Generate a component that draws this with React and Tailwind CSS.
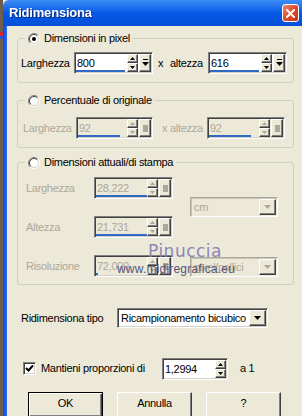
import React from 'react';

const SUNKEN = 'border border-t-[#808080] border-l-[#808080] border-b-white border-r-white shadow-[inset_1px_1px_0_#404040,inset_-1px_-1px_0_#D4D0C8]';
const RAISED = 'bg-[#ECE9D8] border border-t-white border-l-white border-b-[#404040] border-r-[#404040] shadow-[inset_-1px_-1px_0_#808080]';

const Tri = ({ up, color = '#000' }) => (
    <svg width="5" height="3" viewBox="0 0 5 3">
        <polygon points={up ? '0,3 5,3 2.5,0' : '0,0 5,0 2.5,3'} fill={color} />
    </svg>
);

const Radio = ({ checked }) => (
    <svg width="12" height="12" viewBox="0 0 12 12" className="shrink-0">
        <circle cx="6" cy="6" r="5" fill="white" />
        <path d="M 2.1 9.9 A 5.5 5.5 0 0 1 9.9 2.1" fill="none" stroke="#808080" />
        <path d="M 9.9 2.1 A 5.5 5.5 0 0 1 2.1 9.9" fill="none" stroke="#ffffff" />
        <path d="M 2.8 9.2 A 4.5 4.5 0 0 1 9.2 2.8" fill="none" stroke="#404040" />
        <path d="M 9.2 2.8 A 4.5 4.5 0 0 1 2.8 9.2" fill="none" stroke="#D4D0C8" />
        {checked && <circle cx="6" cy="6" r="2" fill="#000" />}
    </svg>
);

// edit field with spin arrows and a preset button
const SpinBox = ({ value, w, bar, disabled, extra = true }) => {
    const c = disabled ? '#ACA899' : '#000';
    return (
        <div className={`${w} h-[22px] flex p-[1px] ${SUNKEN} ${disabled ? 'bg-[#ECE9D8]' : 'bg-white'}`}>
            <div className="relative flex-1 flex items-center pl-[1px]">
                <span className={disabled ? 'text-[#ACA899]' : 'text-black'}>{value}</span>
                <div className={`absolute left-0 bottom-0 h-[2px] bg-[#316AC5] ${bar}`} />
            </div>
            <div className="flex flex-col w-[11px]">
                <div className={`h-[9px] flex items-center justify-center ${RAISED}`}><Tri up color={c} /></div>
                <div className={`h-[9px] flex items-center justify-center ${RAISED}`}><Tri color={c} /></div>
            </div>
            {extra && (
                <div className={`ml-[1px] w-[12px] flex items-center justify-center ${RAISED}`}>
                    {disabled ? (
                        <div className="w-[5px] h-[7px] bg-[#ACA899]" />
                    ) : (
                        <svg width="7" height="8" viewBox="0 0 7 8">
                            <rect x="1" y="0" width="5" height="1" fill="#000" />
                            <polygon points="0,3 7,3 3.5,7" fill="#000" />
                        </svg>
                    )}
                </div>
            )}
        </div>
    );
};

const Dropdown = ({ text, w, disabled }) => (
    <div className={`${w} h-[20px] flex p-[1px] ${disabled
        ? 'bg-[#ECE9D8] border border-t-[#ACA899] border-l-[#ACA899] border-b-white border-r-white shadow-[inset_1px_1px_0_#C9C6B7]'
        : `bg-white ${SUNKEN}`}`}>
        <span className={`flex-1 flex items-center pl-[2px] ${disabled ? 'text-[#ACA899]' : 'text-black'}`}>{text}</span>
        <div className={`w-[17px] flex items-center justify-center ${RAISED}`}>
            <svg width="7" height="4" viewBox="0 0 7 4">
                <polygon points="0,0 7,0 3.5,4" fill={disabled ? '#ACA899' : '#000'} />
            </svg>
        </div>
    </div>
);

const Group = ({ label, className, children }) => (
    <fieldset className={`w-[277px] ml-[10px] border border-[#D0D0BF] rounded-[3px] ${className}`}>
        <legend className="ml-[7px] pl-[3px] pr-[3px] h-[13px] flex items-center gap-[4px]">
            <Radio checked={label === 'Dimensioni in pixel'} />
            <span>{label}</span>
        </legend>
        {children}
    </fieldset>
);

export default function App() {
    return (
        <div className="w-[302px] h-[416px] overflow-hidden flex bg-[#ECE9D8] text-[11px] tracking-[-0.3px] text-black font-['Liberation_Sans',Arial,sans-serif]">
            {/* desktop behind the dialog */}
            <div className="w-[3px] shrink-0 bg-[#6E5D4E] flex flex-col">
                <div className="mt-[32px] h-[4px] bg-[#D8262A]" />
                <div className="h-[3px] bg-[#2B50D8]" />
            </div>

            <div className="flex-1 flex flex-col">
                {/* title bar */}
                <div className="h-[26px] shrink-0 flex items-center justify-between pl-[6px] pr-[3px] rounded-tl-[6px] bg-gradient-to-b from-[#3D8DF5] via-[#0458E6] to-[#0650D8]">
                    <span className="text-white font-bold text-[13px] tracking-[-0.2px] drop-shadow-[1px_1px_0_#0A2A80]">Ridimensiona</span>
                    <div className="w-[17px] h-[18px] rounded-[3px] border border-white bg-gradient-to-br from-[#EE8A6E] via-[#DC4A2B] to-[#C2381A] flex items-center justify-center">
                        <svg width="9" height="9" viewBox="0 0 9 9">
                            <path d="M1 1 L8 8 M8 1 L1 8" stroke="#fff" strokeWidth="2" strokeLinecap="square" />
                        </svg>
                    </div>
                </div>

                <div className="flex-1 flex">
                    <div className="w-[4px] shrink-0 bg-gradient-to-r from-[#0A48E0] to-[#2A66F5]" />

                    <div className="relative flex-1 flex flex-col pt-[6px]">
                        <Group label="Dimensioni in pixel" className="pt-[7px] pb-[8px]">
                            <div className="flex items-center pl-[3px]">
                                <span className="w-[53px]">Larghezza</span>
                                <SpinBox value="800" w="w-[79px]" bar="w-[49px]" />
                                <span className="ml-[5px] w-[12px]">x</span>
                                <span className="w-[38px]">altezza</span>
                                <SpinBox value="616" w="w-[79px]" bar="w-[49px]" />
                            </div>
                        </Group>

                        <Group label="Percentuale di originale" className="mt-[11px] pt-[10px] pb-[8px]">
                            <div className="flex items-center pl-[5px] text-[#ACA899]">
                                <span className="w-[53px]">Larghezza</span>
                                <SpinBox value="92" w="w-[77px]" bar="w-[42px]" disabled />
                                <span className="ml-[9px] w-[45px]">x altezza</span>
                                <SpinBox value="92" w="w-[78px]" bar="w-[42px]" disabled />
                            </div>
                        </Group>

                        <Group label="Dimensioni attuali/di stampa" className="mt-[8px] pt-[8px] pb-[7px]">
                            <div className="flex pl-[8px] text-[#ACA899]">
                                <div className="flex flex-col gap-[17px]">
                                    <div className="flex items-center">
                                        <span className="w-[68px]">Larghezza</span>
                                        <SpinBox value="28,222" w="w-[79px]" bar="w-[51px]" disabled />
                                    </div>
                                    <div className="flex items-center">
                                        <span className="w-[68px]">Altezza</span>
                                        <SpinBox value="21,731" w="w-[79px]" bar="w-[51px]" disabled />
                                    </div>
                                    <div className="flex items-center">
                                        <span className="w-[68px]">Risoluzione</span>
                                        <SpinBox value="72,000" w="w-[79px]" bar="w-[2px]" disabled />
                                    </div>
                                </div>
                                <div className="ml-[17px] flex flex-col">
                                    <div className="mt-[20px]"><Dropdown text="cm" w="w-[88px]" disabled /></div>
                                    <div className="mt-[40px]"><Dropdown text="pixel/pollici" w="w-[88px]" disabled /></div>
                                </div>
                            </div>
                        </Group>

                        <div className="mt-[23px] flex items-center pl-[14px]">
                            <span className="w-[96px]">Ridimensiona tipo</span>
                            <Dropdown text="Ricampionamento bicubico" w="w-[151px]" />
                        </div>

                        <div className="mt-[30px] flex items-center pl-[16px]">
                            <div className={`w-[13px] h-[13px] bg-white flex items-center justify-center ${SUNKEN}`}>
                                <svg width="9" height="9" viewBox="0 0 9 9">
                                    <path d="M1 4 L3.5 6.5 L8 1.5" fill="none" stroke="#000" strokeWidth="2" />
                                </svg>
                            </div>
                            <span className="ml-[5px] w-[121px]">Mantieni proporzioni di</span>
                            <div className="h-[21px]">
                                <SpinBox value="1,2994" w="w-[66px]" bar="w-0" extra={false} />
                            </div>
                            <span className="ml-[12px]">a 1</span>
                        </div>

                        <div className="mt-[13px] flex gap-[14px] pl-[21px]">
                            <button className="w-[75px] h-[26px] bg-[#ECE9D8] border border-black shadow-[inset_1px_1px_0_#fff,inset_-1px_-1px_0_#404040,inset_-2px_-2px_0_#808080] pb-[3px]">OK</button>
                            <button className={`w-[75px] h-[26px] pb-[3px] ${RAISED}`}>Annulla</button>
                            <button className={`w-[75px] h-[26px] pb-[3px] ${RAISED}`}>?</button>
                        </div>

                        {/* watermark over the dialog */}
                        <span className="absolute left-[141px] top-[213px] text-[17px] tracking-[0.5px] text-[#8A87B8] font-['DejaVu_Sans',sans-serif]">Pinuccia</span>
                        <span className="absolute left-[110px] top-[234px] text-[12px] tracking-[0.2px] text-[#55547A]">www.midiregrafica.eu</span>
                    </div>
                </div>
            </div>
        </div>
    );
}
